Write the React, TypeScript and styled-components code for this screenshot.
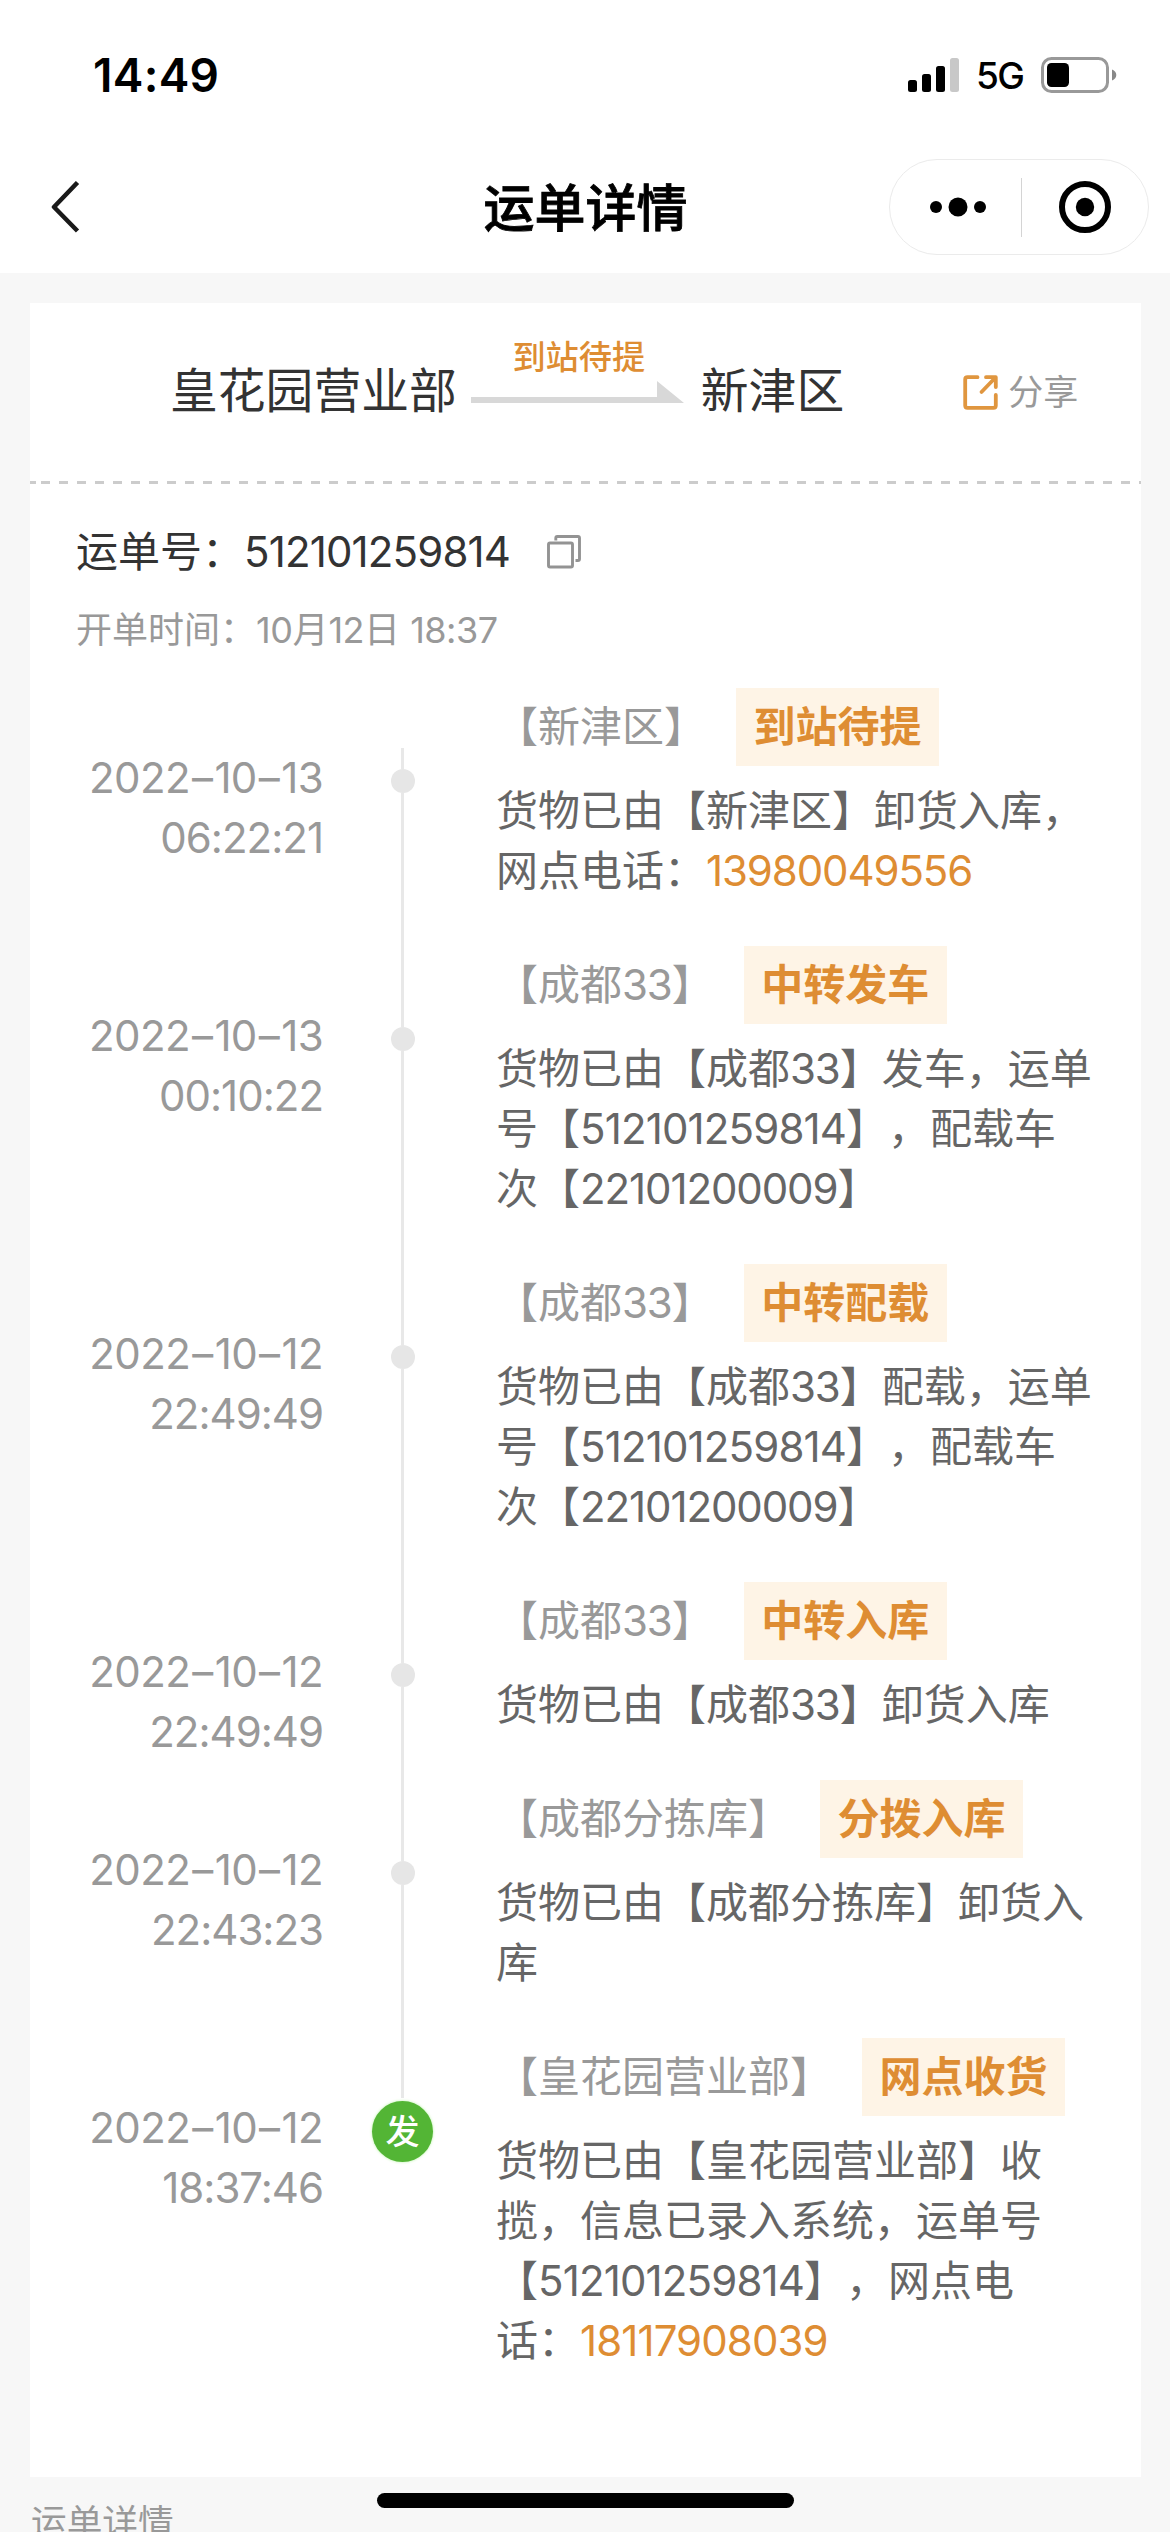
import React from 'react';
import styled, { createGlobalStyle, css } from 'styled-components';

const GlobalStyle = createGlobalStyle`
  * { box-sizing: border-box; }
  html, body { margin: 0; padding: 0; background: #f7f7f7; }
  body {
    font-family: Inter, 'Noto Sans CJK SC', sans-serif;
    text-spacing-trim: space-all;
    color: #333;
  }
`;

const Screen = styled.div`
  position: relative;
  width: 1170px;
  height: 2532px;
  overflow: hidden;
  background: #f7f7f7;
  display: flex;
  flex-direction: column;
`;

const Header = styled.header`
  flex: none;
  height: 273px;
  background: #fff;
  display: flex;
  flex-direction: column;
`;

const StatusBar = styled.div`
  height: 141px;
  padding: 9px 53px 0 93px;
  display: flex;
  align-items: center;
  justify-content: space-between;
`;

const Clock = styled.div`
  font-size: 46px;
  font-weight: 600;
  letter-spacing: 0.3px;
  color: #000;
`;

const StatusIcons = styled.div`
  display: flex;
  align-items: center;
`;

const Network = styled.span`
  width: 48px;
  margin: 2px 17px 0 17px;
  font-size: 37px;
  line-height: 40px;
  font-weight: 500;
  letter-spacing: -1.5px;
  color: #000;
`;

const NavBar = styled.div`
  height: 132px;
  padding: 0 21px 0 50px;
  display: grid;
  grid-template-columns: 1fr auto 1fr;
  align-items: center;
`;

const Title = styled.h1`
  margin: 3px 28px 0 0;
  font-size: 51px;
  line-height: 60px;
  font-weight: 500;
  -webkit-text-stroke: 0.8px #000;
  color: #000;
`;

const Capsule = styled.div`
  justify-self: end;
  width: 260px;
  height: 96px;
  border: 1.5px solid #ebebeb;
  border-radius: 48px;
  display: flex;
  align-items: center;
`;

const CapsuleButton = styled.div<{ $inset?: number }>`
  flex: 1;
  padding-left: ${(p) => p.$inset ?? 0}px;
  display: flex;
  justify-content: center;
`;

const CapsuleDivider = styled.div`
  width: 1px;
  height: 59px;
  background: #d4d4d4;
`;

const Card = styled.main`
  flex: none;
  width: 1111px;
  height: 2174px;
  margin: 30px 0 0 30px;
  background: #fff;
`;

const Route = styled.section`
  height: 178px;
  padding-left: 140px;
  display: flex;
`;

const Place = styled.span`
  margin-top: 58px;
  font-size: 47.8px;
  line-height: 60px;
  color: #333;
  white-space: nowrap;
`;

const RouteStatus = styled.div`
  width: 213px;
  margin: 33px 17px 0 14px;
  display: flex;
  flex-direction: column;
  align-items: center;
`;

const RouteLabel = styled.span`
  font-size: 33.2px;
  line-height: 42px;
  font-weight: 500;
  color: #de8d33;
  margin: 0 0 3px 3px;
`;

const Share = styled.div`
  margin: 67px 0 0 119px;
  height: 44px;
  display: flex;
  align-items: center;
  gap: 10px;
  font-size: 35px;
  line-height: 40px;
  color: #999;
  white-space: nowrap;
`;

const ShareText = styled.span`
  margin-top: -1px;
`;

const DashedRule = styled.div`
  height: 3px;
  background:
    linear-gradient(#ccc, #ccc) 0 0 / 6px 3px no-repeat,
    linear-gradient(90deg, #ccc 50%, transparent 50%) 11px 0 / 18px 3px repeat-x;
`;

const Summary = styled.section`
  padding: 38px 46px 0;
`;

const WaybillRow = styled.div`
  display: flex;
  align-items: center;
  height: 60px;
  font-size: 42px;
  line-height: 60px;
  color: #333;
`;

const Digits = styled.span<{ $accent?: boolean; $gap?: number }>`
  letter-spacing: ${(p) => p.$gap ?? -1.1}px;
  ${(p) => p.$accent && css`color: #de8d33;`}
`;

const CopyButton = styled.span`
  display: flex;
  margin-left: 37px;
`;

const CreatedAt = styled.div`
  margin-top: 23px;
  height: 50px;
  line-height: 50px;
  font-size: 36px;
  color: #999;
  white-space: pre;
`;

const Timeline = styled.ol`
  list-style: none;
  margin: 33px 0 0;
  padding: 0;
`;

const Step = styled.li`
  display: grid;
  grid-template-columns: 292px 161px 1fr;
`;

const Time = styled.div`
  margin-right: -1px;
  padding-top: 60px;
  text-align: right;
  font-size: 42px;
  line-height: 60px;
  letter-spacing: -1px;
  color: #999;
`;

const DateText = styled.span`
  letter-spacing: -0.6px;
`;

const Dash = styled.span`
  margin: 0 2px;
`;

const Rail = styled.div<{ $first?: boolean }>`
  display: flex;
  flex-direction: column;
  align-items: center;
  padding-top: ${(p) => (p.$first ? 60 : 0)}px;
`;

const Stem = styled.div<{ $height?: number }>`
  width: 3px;
  background: #e8e8e8;
  ${(p) => (p.$height ? css`height: ${p.$height}px;` : css`flex: 1;`)}
`;

const Dot = styled.div`
  width: 24px;
  height: 24px;
  border-radius: 50%;
  background: #e6e6e6;
`;

const OriginBadge = styled.div`
  width: 61px;
  height: 61px;
  margin-top: 3px;
  border-radius: 50%;
  background: #53b535;
  box-shadow: 0 0 3px #b9f3a6;
  display: flex;
  align-items: center;
  justify-content: center;
  font-size: 34px;
  line-height: 34px;
  font-weight: 500;
  color: #fff;
`;

const Content = styled.div<{ $last?: boolean }>`
  padding-left: 13px;
  padding-bottom: ${(p) => (p.$last ? 0 : 45)}px;
`;

const StepHead = styled.div`
  height: 78px;
  display: flex;
  align-items: center;
  gap: 30px;
  font-size: 42px;
  line-height: 60px;
  color: #999;
  white-space: nowrap;
`;

const Tag = styled.span`
  height: 78px;
  padding: 0 17.5px;
  background: #fef4e6;
  font-weight: 700;
  line-height: 78px;
  color: #de8d33;
`;

const Detail = styled.p`
  margin: 15px 0 0;
  font-size: 42px;
  line-height: 60px;
  color: #666;
  white-space: pre;
`;

const FooterLabel = styled.div`
  margin: 20px 0 0 31px;
  font-size: 35.7px;
  line-height: 50px;
  color: #999;
`;

const HomeIndicator = styled.div`
  position: absolute;
  left: 377px;
  top: 2493px;
  width: 417px;
  height: 15px;
  border-radius: 8px;
  background: #000;
`;

const SignalIcon = () => (
  <svg width="51" height="35" viewBox="0 0 51 35">
    <rect x="0" y="22" width="9" height="12" rx="2.5" fill="#000" />
    <rect x="14" y="16" width="9" height="18" rx="2.5" fill="#000" />
    <rect x="28" y="8" width="9" height="26" rx="2.5" fill="#000" />
    <rect x="42" y="0" width="9" height="34" rx="2.5" fill="#c8c8c8" />
  </svg>
);

const BatteryIcon = () => (
  <svg width="76" height="36" viewBox="0 0 76 36">
    <rect x="1.5" y="1.5" width="65" height="33" rx="9" fill="none" stroke="#999" strokeWidth="3" />
    <rect x="6" y="6" width="22" height="24" rx="4.5" fill="#000" />
    <path d="M71 12.5c2.8 1 4.3 3 4.3 5.5s-1.5 4.5-4.3 5.5z" fill="#888" />
  </svg>
);

const BackIcon = () => (
  <svg width="32" height="52" viewBox="0 0 32 52" fill="none" stroke="#1a1a1a" strokeWidth="4.5">
    <path d="M27.5 1.5L4 26l23.5 24" strokeLinejoin="round" />
  </svg>
);

const MoreIcon = () => (
  <svg width="58" height="20" viewBox="0 0 58 20">
    <circle cx="7" cy="10" r="6" />
    <circle cx="29" cy="10" r="9.5" />
    <circle cx="51" cy="10" r="6" />
  </svg>
);

const CloseIcon = () => (
  <svg width="54" height="54" viewBox="0 0 54 54">
    <circle cx="27" cy="27" r="23" fill="none" stroke="#000" strokeWidth="6" />
    <circle cx="27" cy="27" r="9.2" />
  </svg>
);

const ArrowIcon = () => (
  <svg width="213" height="22" viewBox="0 0 213 22">
    <path d="M0 16H186V0L213 22H0z" fill="#d8d8d8" />
  </svg>
);

const ShareIcon = () => (
  <svg
    width="35"
    height="35"
    viewBox="0 0 35 35"
    fill="none"
    stroke="#e0963f"
    strokeWidth="3.8"
    strokeLinecap="round"
    strokeLinejoin="round"
  >
    <path d="M14.5 2.2H4.5Q2.2 2.2 2.2 4.5V30.5Q2.2 32.8 4.5 32.8H30.5Q32.8 32.8 32.8 30.5V20" />
    <path d="M23 2.2H32.8V12M32 3L18.5 17" />
  </svg>
);

const CopyIcon = () => (
  <svg width="34" height="34" viewBox="0 0 34 34" fill="none" stroke="#939393" strokeWidth="2.9">
    <rect x="1.5" y="8" width="24" height="24" rx="1.5" />
    <path d="M8.8 5.5V3Q8.8 1.5 10.3 1.5H31Q32.5 1.5 32.5 3V24Q32.5 25.5 31 25.5H28.5" />
  </svg>
);

type StepData = {
  day: number;
  time: string;
  place: React.ReactNode;
  tag: string;
  detail: React.ReactNode;
};

const waybill = <Digits $gap={-0.85}>512101259814</Digits>;
const chengdu = <>【成都<Digits>33</Digits>】</>;

const steps: StepData[] = [
  {
    day: 13,
    time: '06:22:21',
    place: '【新津区】',
    tag: '到站待提',
    detail: <>货物已由【新津区】卸货入库，{'\n'}网点电话：<Digits $accent>13980049556</Digits></>,
  },
  {
    day: 13,
    time: '00:10:22',
    place: chengdu,
    tag: '中转发车',
    detail: <>货物已由{chengdu}发车，运单{'\n'}号【{waybill}】，配载车{'\n'}次【<Digits>22101200009</Digits>】</>,
  },
  {
    day: 12,
    time: '22:49:49',
    place: chengdu,
    tag: '中转配载',
    detail: <>货物已由{chengdu}配载，运单{'\n'}号【{waybill}】，配载车{'\n'}次【<Digits>22101200009</Digits>】</>,
  },
  {
    day: 12,
    time: '22:49:49',
    place: chengdu,
    tag: '中转入库',
    detail: <>货物已由{chengdu}卸货入库</>,
  },
  {
    day: 12,
    time: '22:43:23',
    place: '【成都分拣库】',
    tag: '分拨入库',
    detail: <>货物已由【成都分拣库】卸货入{'\n'}库</>,
  },
  {
    day: 12,
    time: '18:37:46',
    place: '【皇花园营业部】',
    tag: '网点收货',
    detail: (
      <>
        货物已由【皇花园营业部】收{'\n'}揽，信息已录入系统，运单号{'\n'}【{waybill}】，网点电{'\n'}话：
        <Digits $accent $gap={-0.9}>18117908039</Digits>
      </>
    ),
  },
];

export default function App() {
  return (
    <Screen>
      <GlobalStyle />
      <Header>
        <StatusBar>
          <Clock>14:49</Clock>
          <StatusIcons>
            <SignalIcon />
            <Network>5G</Network>
            <BatteryIcon />
          </StatusIcons>
        </StatusBar>
        <NavBar>
          <BackIcon />
          <Title>运单详情</Title>
          <Capsule>
            <CapsuleButton $inset={5}><MoreIcon /></CapsuleButton>
            <CapsuleDivider />
            <CapsuleButton><CloseIcon /></CapsuleButton>
          </Capsule>
        </NavBar>
      </Header>
      <Card>
        <Route>
          <Place>皇花园营业部</Place>
          <RouteStatus>
            <RouteLabel>到站待提</RouteLabel>
            <ArrowIcon />
          </RouteStatus>
          <Place>新津区</Place>
          <Share>
            <ShareIcon />
            <ShareText>分享</ShareText>
          </Share>
        </Route>
        <DashedRule />
        <Summary>
          <WaybillRow>
            <span>运单号：{waybill}</span>
            <CopyButton><CopyIcon /></CopyButton>
          </WaybillRow>
          <CreatedAt>
            开单时间：<Digits $gap={-0.5}>10</Digits>月<Digits $gap={-0.5}>12</Digits>日 <Digits $gap={-0.5}>18:37</Digits>
          </CreatedAt>
        </Summary>
        <Timeline>
          {steps.map((s, i) => {
            const last = i === steps.length - 1;
            return (
              <Step key={s.time + s.tag}>
                <Time>
                  <DateText>2022<Dash>–</Dash>10<Dash>–</Dash>{s.day}</DateText>
                  <br />
                  {s.time}
                </Time>
                <Rail $first={i === 0}>
                  <Stem $height={last ? 60 : i === 0 ? 21 : 81} />
                  {last ? <OriginBadge>发</OriginBadge> : <><Dot /><Stem /></>}
                </Rail>
                <Content $last={last}>
                  <StepHead>
                    <span>{s.place}</span>
                    <Tag>{s.tag}</Tag>
                  </StepHead>
                  <Detail>{s.detail}</Detail>
                </Content>
              </Step>
            );
          })}
        </Timeline>
      </Card>
      <FooterLabel>运单详情</FooterLabel>
      <HomeIndicator />
    </Screen>
  );
}
